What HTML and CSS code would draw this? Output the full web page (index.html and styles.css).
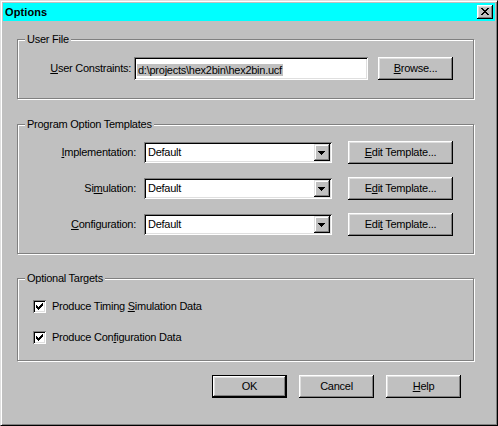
FILE: index.html
```html
<!DOCTYPE html>
<html>
<head>
<meta charset="utf-8">
<title>Options</title>
<link rel="stylesheet" href="styles.css">
</head>
<body>
<div class="window">
  <div class="titlebar">
    <span class="title">Options</span>
    <span class="close">
      <svg width="8" height="7" viewBox="0 0 8 7" shape-rendering="crispEdges"><path d="M0 0h2v1h-2zM6 0h2v1h-2zM1 1h2v1h-2zM5 1h2v1h-2zM2 2h4v1h-4zM3 3h2v1h-2zM2 4h4v1h-4zM1 5h2v1h-2zM5 5h2v1h-2zM0 6h2v1h-2zM6 6h2v1h-2z" fill="#000"/></svg>
    </span>
  </div>
  <div class="content">
    <div class="group group-file">
      <span class="legend">User File</span>
      <div class="file-row">
        <span class="label file-label"><u>U</u>ser Constraints:</span>
        <div class="field file-field"><span class="sel">d:\projects\hex2bin\hex2bin.ucf</span></div>
        <div class="btn browse"><span><u>B</u>rowse...</span></div>
      </div>
    </div>

    <div class="group group-templates">
      <span class="legend">Program Option Templates</span>
      <div class="tpl-grid">
        <span class="label"><u>I</u>mplementation:</span>
        <div class="field combo"><span class="combo-text">Default</span><span class="drop"><svg width="7" height="4" viewBox="0 0 7 4" shape-rendering="crispEdges"><path d="M0 0h7v1h-7zM1 1h5v1h-5zM2 2h3v1h-3zM3 3h1v1h-1z" fill="#000"/></svg></span></div>
        <div class="btn tpl-btn"><span><u>E</u>dit Template...</span></div>

        <span class="label">Si<u>m</u>ulation:</span>
        <div class="field combo"><span class="combo-text">Default</span><span class="drop"><svg width="7" height="4" viewBox="0 0 7 4" shape-rendering="crispEdges"><path d="M0 0h7v1h-7zM1 1h5v1h-5zM2 2h3v1h-3zM3 3h1v1h-1z" fill="#000"/></svg></span></div>
        <div class="btn tpl-btn"><span>E<u>d</u>it Template...</span></div>

        <span class="label"><u>C</u>onfiguration:</span>
        <div class="field combo"><span class="combo-text">Default</span><span class="drop"><svg width="7" height="4" viewBox="0 0 7 4" shape-rendering="crispEdges"><path d="M0 0h7v1h-7zM1 1h5v1h-5zM2 2h3v1h-3zM3 3h1v1h-1z" fill="#000"/></svg></span></div>
        <div class="btn tpl-btn"><span>Edi<u>t</u> Template...</span></div>
      </div>
    </div>

    <div class="group group-targets">
      <span class="legend">Optional Targets</span>
      <div class="check-row">
        <span class="checkbox"><svg width="7" height="7" viewBox="0 0 7 7" shape-rendering="crispEdges"><path d="M6 0h1v1h-1zM5 1h2v1h-2zM0 2h1v1h-1zM4 2h3v1h-3zM0 3h2v1h-2zM3 3h3v1h-3zM0 4h5v1h-5zM1 5h3v1h-3zM2 6h1v1h-1z" fill="#000"/></svg></span>
        <span class="check-label">Produce Timing <u>S</u>imulation Data</span>
      </div>
      <div class="check-row">
        <span class="checkbox"><svg width="7" height="7" viewBox="0 0 7 7" shape-rendering="crispEdges"><path d="M6 0h1v1h-1zM5 1h2v1h-2zM0 2h1v1h-1zM4 2h3v1h-3zM0 3h2v1h-2zM3 3h3v1h-3zM0 4h5v1h-5zM1 5h3v1h-3zM2 6h1v1h-1z" fill="#000"/></svg></span>
        <span class="check-label">Produce Con<u>f</u>iguration Data</span>
      </div>
    </div>

    <div class="actions">
      <div class="btn btn-default"><span>OK</span></div>
      <div class="btn"><span>Cancel</span></div>
      <div class="btn"><span><u>H</u>elp</span></div>
    </div>
  </div>
</div>
</body>
</html>
```

FILE: styles.css
```css
html, body {
  margin: 0;
  padding: 0;
  background: #c0c0c0;
}

body {
  font-family: "Liberation Sans", Arial, sans-serif;
  font-size: 11px;
  letter-spacing: -0.25px;
  color: #000;
}

u {
  text-decoration: underline;
  text-underline-offset: 1px;
}

.window {
  width: 498px;
  height: 426px;
  box-sizing: border-box;
  background: #c0c0c0;
  border: 1px solid;
  border-color: #dfdfdf #000 #000 #dfdfdf;
  box-shadow: inset 1px 1px #fff, inset -1px -1px #808080;
  padding: 2px;
}

.titlebar {
  height: 18px;
  background: #00ffff;
  display: flex;
  align-items: center;
  justify-content: space-between;
  padding: 0 2px 0 2px;
}

.title {
  font-weight: bold;
  letter-spacing: 0.1px;
  line-height: 18px;
}

.close {
  width: 16px;
  height: 14px;
  box-sizing: border-box;
  background: #c0c0c0;
  box-shadow: inset -1px -1px #000, inset 1px 1px #fff, inset -2px -2px #808080, inset 2px 2px #dfdfdf;
  display: flex;
  align-items: center;
  justify-content: center;
  padding: 0 1px 1px 0;
}

.close svg {
  display: block;
}

.content {
  padding: 18px 21px 0 14px;
}

.group {
  position: relative;
  border: 1px solid #808080;
  box-shadow: inset 1px 1px #fff, 1px 1px #fff;
}

.legend {
  position: absolute;
  top: -7px;
  left: 7px;
  padding: 0 2px;
  background: #c0c0c0;
  line-height: 13px;
}

.label {
  text-align: right;
  line-height: 23px;
  white-space: nowrap;
}

/* User File */
.group-file {
  padding: 17px 0 18px 0;
}

.file-row {
  display: flex;
  align-items: center;
  height: 23px;
}

.file-label {
  width: 113px;
  margin-right: 3px;
}

.field {
  box-sizing: border-box;
  background: #fff;
  box-shadow: inset 1px 1px #808080, inset -1px -1px #fff, inset 2px 2px #000, inset -2px -2px #dfdfdf;
}

.file-field {
  width: 234px;
  height: 23px;
  display: flex;
  align-items: center;
  padding: 3px 0 0 3px;
  white-space: nowrap;
  overflow: hidden;
}

.sel {
  background: #c0c0c0;
  padding: 0 1px;
  line-height: 12px;
}

.browse {
  margin-left: 10px;
}

/* Buttons */
.btn {
  width: 75px;
  height: 23px;
  box-sizing: border-box;
  background: #c0c0c0;
  box-shadow: inset -1px -1px #000, inset 1px 1px #fff, inset -2px -2px #808080, inset 2px 2px #dfdfdf;
  display: flex;
  align-items: center;
  justify-content: center;
  padding-bottom: 1px;
  white-space: nowrap;
}

.btn-default {
  border: 1px solid #000;
}

/* Templates */
.group-templates {
  margin-top: 25px;
  padding: 16px 0 17px 0;
}

.tpl-grid {
  display: grid;
  grid-template-columns: 118px 188px 105px;
  grid-auto-rows: 23px;
  column-gap: 8px;
  row-gap: 13px;
  align-items: center;
}

.combo {
  height: 21px;
  display: flex;
  align-items: center;
  justify-content: space-between;
  padding: 2px;
}

.combo-text {
  padding-left: 2px;
  line-height: 17px;
}

.drop {
  width: 16px;
  height: 17px;
  box-sizing: border-box;
  background: #c0c0c0;
  box-shadow: inset -1px -1px #000, inset 1px 1px #dfdfdf, inset -2px -2px #808080, inset 2px 2px #fff;
  display: flex;
  align-items: center;
  justify-content: center;
  padding: 1px 1px 0 0;
}

.drop svg {
  display: block;
}

.tpl-btn {
  width: 105px;
  margin-left: 8px;
}

/* Optional targets */
.group-targets {
  margin-top: 24px;
  padding: 19px 0 15px 0;
  display: flex;
  flex-direction: column;
  row-gap: 15px;
}

.check-row {
  display: flex;
  align-items: center;
  height: 16px;
}

.checkbox {
  width: 13px;
  height: 13px;
  box-sizing: border-box;
  margin-left: 15px;
  margin-right: 6px;
  background: #fff;
  box-shadow: inset 1px 1px #808080, inset -1px -1px #fff, inset 2px 2px #000, inset -2px -2px #dfdfdf;
  padding: 3px;
}

.checkbox svg {
  display: block;
}

.check-label {
  line-height: 16px;
}

/* Bottom buttons */
.actions {
  margin-top: 14px;
  display: flex;
  justify-content: flex-end;
  column-gap: 12px;
  padding-right: 13px;
}
```
